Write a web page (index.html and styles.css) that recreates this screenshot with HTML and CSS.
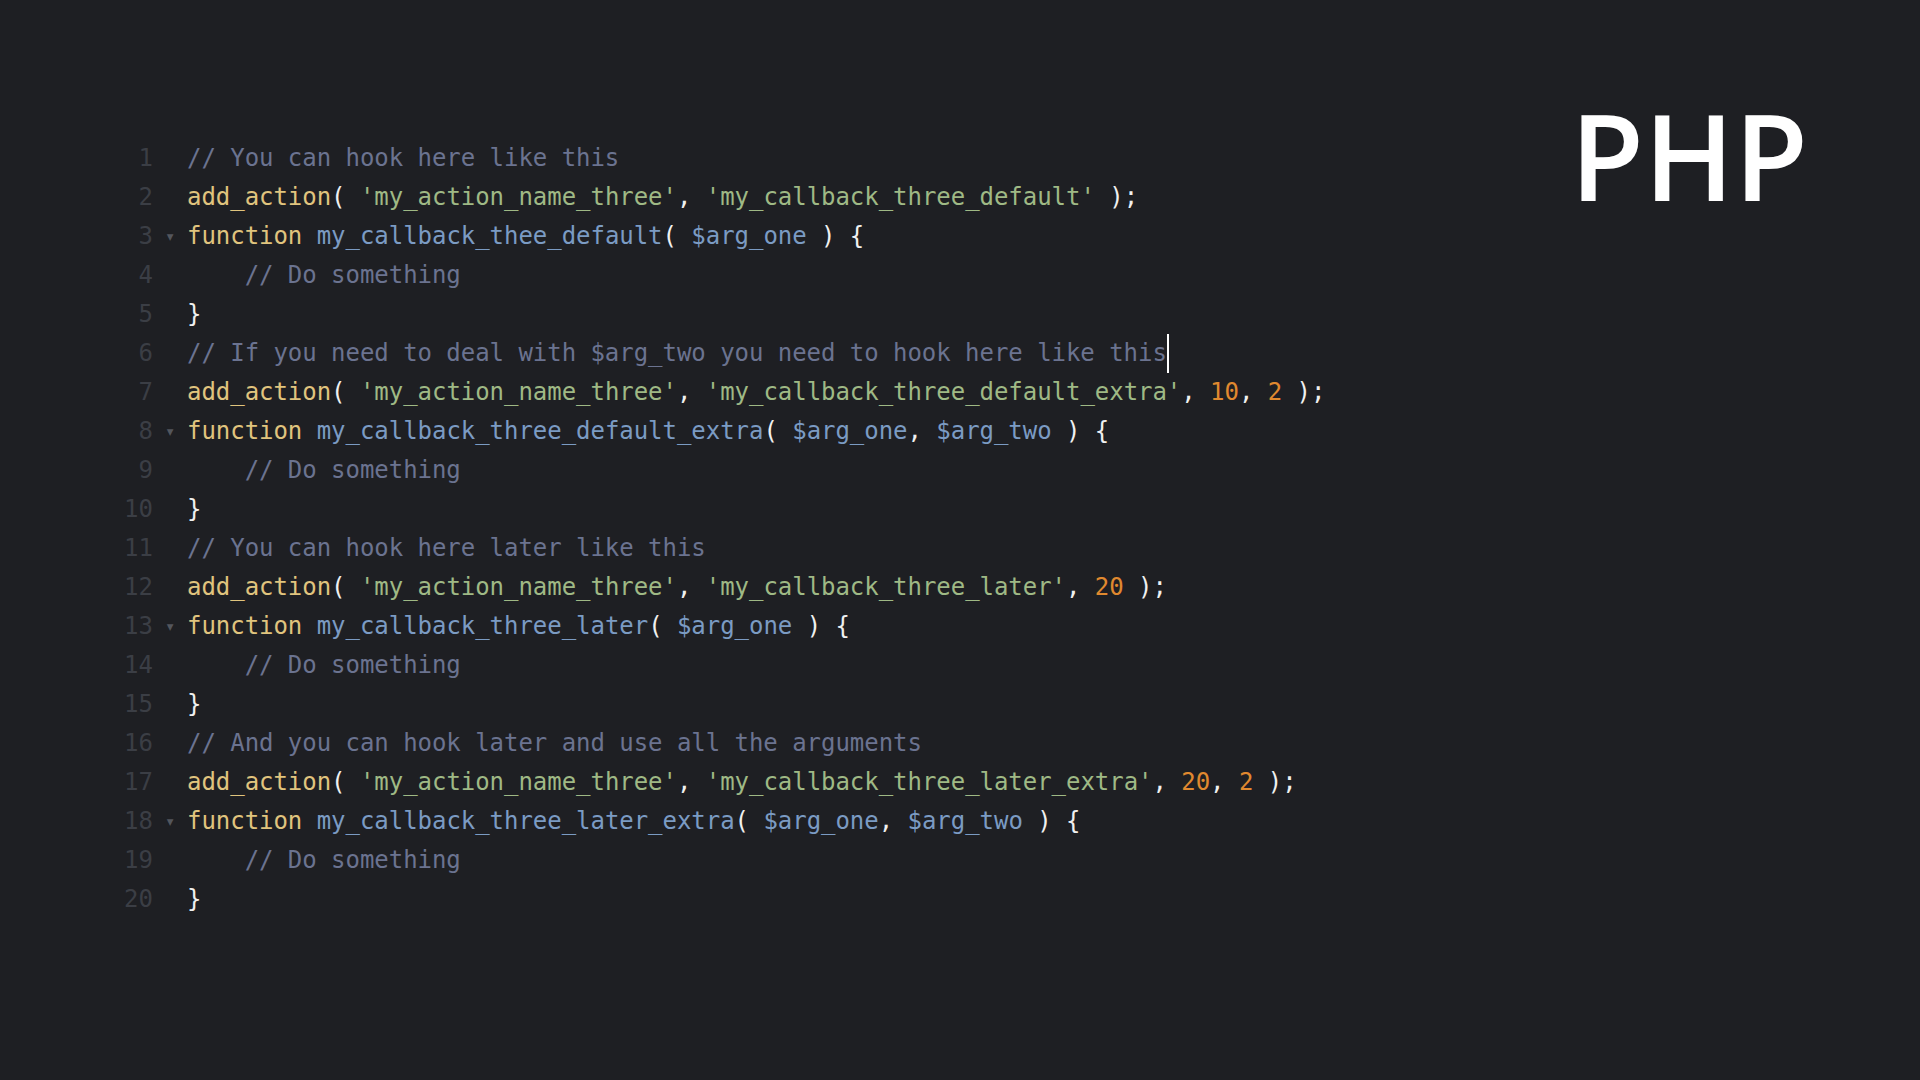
FILE: index.html
```html
<!DOCTYPE html>
<html lang="en">
<head>
<meta charset="utf-8">
<title>PHP hooks</title>
<link rel="stylesheet" href="styles.css">
</head>
<body>
<main class="page">
  <div class="editor">
    <div class="line"><span class="ln">1</span><span class="fold"></span><span class="code"><span class="c">// You can hook here like this</span></span></div>
    <div class="line"><span class="ln">2</span><span class="fold"></span><span class="code"><span class="k">add_action</span><span class="p">( </span><span class="s">'my_action_name_three'</span><span class="p">, </span><span class="s">'my_callback_three_default'</span><span class="p"> );</span></span></div>
    <div class="line"><span class="ln">3</span><span class="fold">▾</span><span class="code"><span class="k">function</span> <span class="f">my_callback_thee_default</span><span class="p">( </span><span class="v">$arg_one</span><span class="p"> ) {</span></span></div>
    <div class="line"><span class="ln">4</span><span class="fold"></span><span class="code">    <span class="c">// Do something</span></span></div>
    <div class="line"><span class="ln">5</span><span class="fold"></span><span class="code"><span class="p">}</span></span></div>
    <div class="line"><span class="ln">6</span><span class="fold"></span><span class="code"><span class="c">// If you need to deal with $arg_two you need to hook here like this</span><span class="cursor"></span></span></div>
    <div class="line"><span class="ln">7</span><span class="fold"></span><span class="code"><span class="k">add_action</span><span class="p">( </span><span class="s">'my_action_name_three'</span><span class="p">, </span><span class="s">'my_callback_three_default_extra'</span><span class="p">, </span><span class="n">10</span><span class="p">, </span><span class="n">2</span><span class="p"> );</span></span></div>
    <div class="line"><span class="ln">8</span><span class="fold">▾</span><span class="code"><span class="k">function</span> <span class="f">my_callback_three_default_extra</span><span class="p">( </span><span class="v">$arg_one</span><span class="p">, </span><span class="v">$arg_two</span><span class="p"> ) {</span></span></div>
    <div class="line"><span class="ln">9</span><span class="fold"></span><span class="code">    <span class="c">// Do something</span></span></div>
    <div class="line"><span class="ln">10</span><span class="fold"></span><span class="code"><span class="p">}</span></span></div>
    <div class="line"><span class="ln">11</span><span class="fold"></span><span class="code"><span class="c">// You can hook here later like this</span></span></div>
    <div class="line"><span class="ln">12</span><span class="fold"></span><span class="code"><span class="k">add_action</span><span class="p">( </span><span class="s">'my_action_name_three'</span><span class="p">, </span><span class="s">'my_callback_three_later'</span><span class="p">, </span><span class="n">20</span><span class="p"> );</span></span></div>
    <div class="line"><span class="ln">13</span><span class="fold">▾</span><span class="code"><span class="k">function</span> <span class="f">my_callback_three_later</span><span class="p">( </span><span class="v">$arg_one</span><span class="p"> ) {</span></span></div>
    <div class="line"><span class="ln">14</span><span class="fold"></span><span class="code">    <span class="c">// Do something</span></span></div>
    <div class="line"><span class="ln">15</span><span class="fold"></span><span class="code"><span class="p">}</span></span></div>
    <div class="line"><span class="ln">16</span><span class="fold"></span><span class="code"><span class="c">// And you can hook later and use all the arguments</span></span></div>
    <div class="line"><span class="ln">17</span><span class="fold"></span><span class="code"><span class="k">add_action</span><span class="p">( </span><span class="s">'my_action_name_three'</span><span class="p">, </span><span class="s">'my_callback_three_later_extra'</span><span class="p">, </span><span class="n">20</span><span class="p">, </span><span class="n">2</span><span class="p"> );</span></span></div>
    <div class="line"><span class="ln">18</span><span class="fold">▾</span><span class="code"><span class="k">function</span> <span class="f">my_callback_three_later_extra</span><span class="p">( </span><span class="v">$arg_one</span><span class="p">, </span><span class="v">$arg_two</span><span class="p"> ) {</span></span></div>
    <div class="line"><span class="ln">19</span><span class="fold"></span><span class="code">    <span class="c">// Do something</span></span></div>
    <div class="line"><span class="ln">20</span><span class="fold"></span><span class="code"><span class="p">}</span></span></div>
  </div>
  <h1 class="title">PHP</h1>
</main>
</body>
</html>
```
FILE: styles.css
```css
html, body {
  margin: 0;
  padding: 0;
  background: #1e1f23;
}
.page {
  width: 1920px;
  height: 1080px;
  display: flex;
  align-items: flex-start;
  box-sizing: border-box;
}
.editor {
  padding-top: 139px;
  font-family: "DejaVu Sans Mono", "Liberation Mono", monospace;
  font-size: 24px;
  line-height: 39px;
  color: #f0f0f0;
}
.line {
  display: flex;
  height: 39px;
  white-space: pre;
}
.ln {
  width: 153px;
  text-align: right;
  color: #3b3e45;
  flex: none;
}
.fold {
  width: 34px;
  flex: none;
  color: #53565d;
  font-size: 17px;
  text-align: center;
  box-sizing: border-box;
}
.code {
  display: block;
  letter-spacing: -0.04px;
}
.c { color: #6b7390; }
.k { color: #e0c47e; }
.s { color: #9fb985; }
.f { color: #7b9bc3; }
.v { color: #7b9bc3; }
.n { color: #e0892f; }
.p { color: #f0f0f0; }
.cursor {
  display: inline-block;
  width: 2px;
  height: 39px;
  vertical-align: top;
  background: #ffffff;
}
.title {
  margin: 95px 112px 0 auto;
  font-family: "Open Sans", "Noto Sans", sans-serif;
  font-weight: 600;
  font-size: 120px;
  line-height: 120px;
  color: #ffffff;
}
```
